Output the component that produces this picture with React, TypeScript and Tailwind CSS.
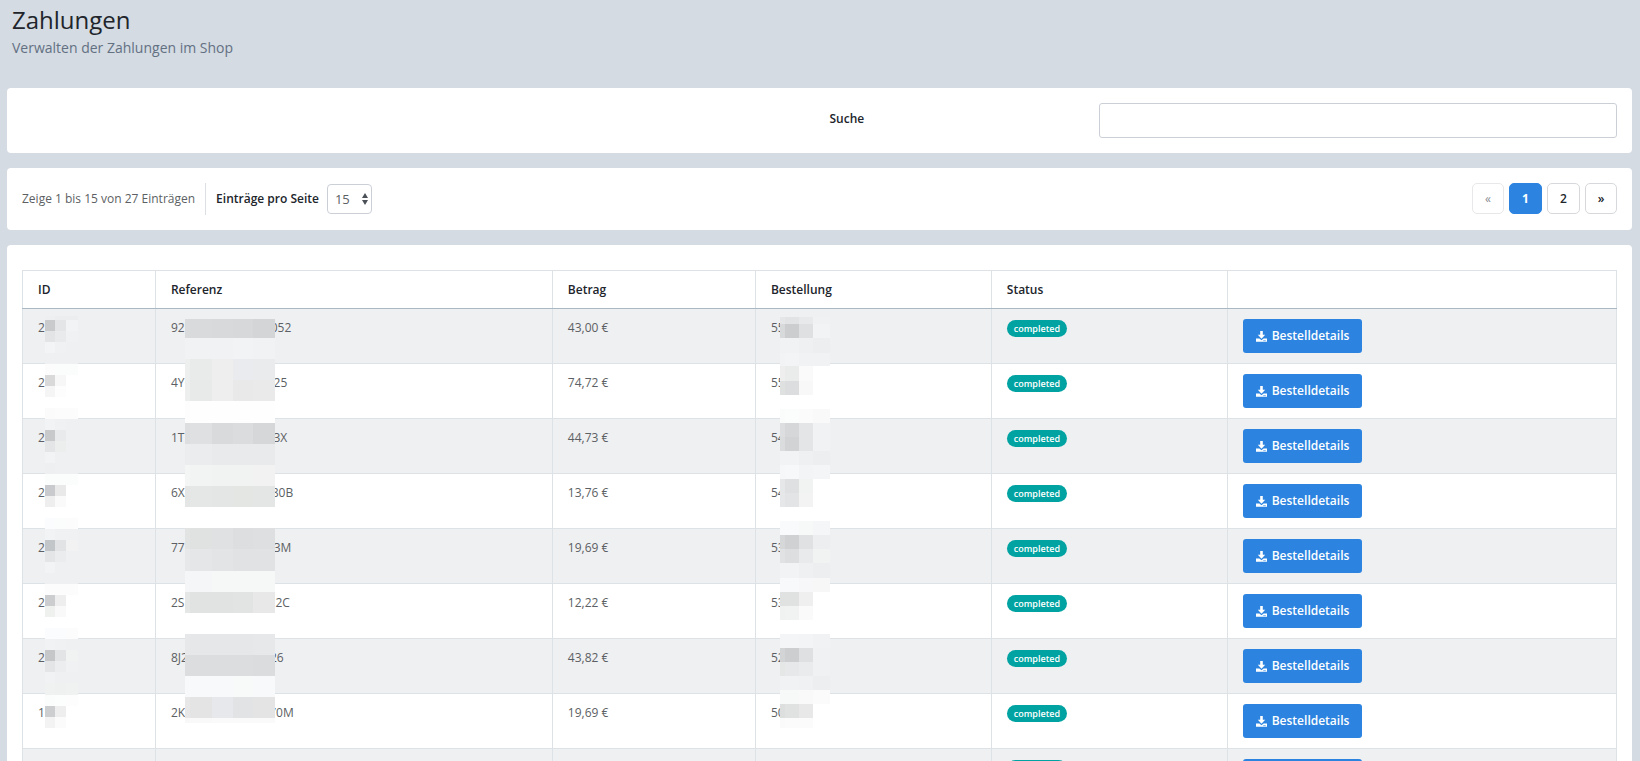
import React from 'react'

type Strip = [y: number, height: number, colors: string[]]

type Payment = { id: string; refStart: string; refGap: number; refEnd: string; amount: string; order: string }

const payments: Payment[] = [
  { id: '2', refStart: '92', refGap: 86, refEnd: '052', amount: '43,00 €', order: '55' },
  { id: '2', refStart: '4Y', refGap: 89, refEnd: '25', amount: '74,72 €', order: '55' },
  { id: '2', refStart: '1T', refGap: 89, refEnd: '3X', amount: '44,73 €', order: '54' },
  { id: '2', refStart: '6X', refGap: 87, refEnd: '80B', amount: '13,76 €', order: '54' },
  { id: '2', refStart: '77', refGap: 89, refEnd: '3M', amount: '19,69 €', order: '53' },
  { id: '2', refStart: '2S', refGap: 91, refEnd: '2C', amount: '12,22 €', order: '53' },
  { id: '2', refStart: '8J2', refGap: 82, refEnd: '26', amount: '43,82 €', order: '52' },
  { id: '1', refStart: '2K', refGap: 84, refEnd: '70M', amount: '19,69 €', order: '50' },
  { id: '1', refStart: '', refGap: 0, refEnd: '', amount: '', order: '' },
]

// Masks start at the top left corner of the first body row
const idEdges = [22, 32, 43, 55]
const idStrips: Strip[] = [
  [7, 4, ['#eeeff1', '#ecedef', '#ecedef']],
  [11, 11, ['#c9cacc', '#e4e5e7', '#f2f3f5']],
  [22, 11, ['#e3e4e6', '#e9eaec', '#f0f1f3']],
  [33, 11, ['#f3f4f6', '#f0f1f3', '#eff0f2']],
  [44, 11, ['#eff0f2', '#eff0f2', '#eff0f2']],
  [55, 11, ['#fbfcfb', '#fbfdfd', '#fbfdfd']],
  [66, 11, ['#d9d9d9', '#f7f7f7']],
  [77, 11, ['#f5f5f5', '#fdfdfd']],
  [99, 11, ['#fbfbfb', '#fcfcfc', '#fcfcfc']],
  [110, 11, ['#f2f3f5', '#f0f1f3', '#eff0f2']],
  [121, 11, ['#c8c9cb', '#e9eaeb', '#eff0f2']],
  [132, 11, ['#e4e5e7', '#eceeed']],
  [143, 11, ['#f2f3f5', '#eff0f2']],
  [154, 11, ['#eeeff1', '#eff0f2', '#eff0f2']],
  [165, 11, ['#fbfdfc', '#fbfdfd', '#fbfdfc']],
  [176, 11, ['#c9cace', '#e9e9ea']],
  [187, 11, ['#eeeeee', '#fafafa']],
  [209, 11, ['#fbfcfd', '#fbfdfd', '#fcfcfc']],
  [220, 11, ['#f2f3f5', '#f0f1f3', '#f0f1f3']],
  [231, 11, ['#c3c6c8', '#e2e3e4', '#f2f2f2']],
  [242, 11, ['#e4e5e7', '#ebecee', '#eff0f2']],
  [253, 11, ['#f2f3f5', '#eff0f2']],
  [264, 11, ['#eff0f2', '#eff0f2', '#eff0f2']],
  [275, 11, ['#fdfcfc', '#fcfcfd', '#fcfcfd']],
  [286, 11, ['#cccdcf', '#eeeeee']],
  [297, 11, ['#eff1ef', '#f9f9f9']],
  [319, 11, ['#fbfcfd', '#fbfcfd', '#fcfcfc']],
  [330, 11, ['#f1f2f4', '#f0f1f3', '#eff0f2']],
  [341, 11, ['#c5c7c9', '#e2e4e5', '#f1f3f2']],
  [352, 11, ['#e4e5e7', '#ecedef', '#f0f1f3']],
  [363, 11, ['#f1f2f4', '#eff0f2', '#eff0f2']],
  [374, 12, ['#f0f1f1', '#eff1f1', '#f0f1f1']],
  [386, 11, ['#fbfdfc', '#fcfdfd', '#fdfdfd']],
  [397, 11, ['#cdcecf', '#eeeeef']],
  [408, 11, ['#f3f3f3', '#fbfbfb']],
]

const refEdges = [29, 34, 56, 77, 97, 119]
const refStrips: Strip[] = [
  [10, 19, ['#dadbdd', '#d9dadc', '#d8d9db', '#d7d8da', '#d4d5d7']],
  [29, 21, ['#f1f2f4', '#f1f2f4', '#f1f2f4', '#f2f3f5', '#f1f2f4']],
  [50, 21, ['#edefef', '#e8ebea', '#eeeeee', '#eaebee', '#eaebed']],
  [71, 21, ['#edeeee', '#e8eae9', '#eeeeee', '#e9e9e9', '#eaeaea']],
  [92, 22, ['#fdfdfe', '#fefefe', '#fefefe', '#fefefe', '#fefefe']],
  [114, 21, ['#dddee0', '#dfe0e2', '#d9dadc', '#dbdcde', '#d6d7d9']],
  [135, 21, ['#ecedef', '#ebeced', '#e9eaec', '#e9eaec', '#e9eaec']],
  [156, 21, ['#f4f5f5', '#f2f4f4', '#f1f3f3', '#f1f3f3', '#f2f2f2']],
  [177, 21, ['#e4e6e5', '#e5e7e6', '#e4e6e5', '#e4e6e4', '#e4e6e5']],
  [219, 21, ['#e2e4e4', '#e0e2e2', '#e0e1e2', '#dddee0', '#dedfe1']],
  [240, 22, ['#e6e8e9', '#e4e6e7', '#e3e4e6', '#e1e2e4', '#e1e2e4']],
  [262, 21, ['#f4f6f8', '#f4f6f8', '#f6f8f7', '#f5f8f7', '#f6f8f7']],
  [283, 21, ['#e5e7e6', '#e1e2e2', '#e1e2e2', '#e1e4e3', '#e8e8e8']],
  [325, 21, ['#e7e8ea', '#e6e7e9', '#e6e7e9', '#e6e7e9', '#e7e8ea']],
  [346, 21, ['#dcdddf', '#dcdddf', '#dcdddf', '#dcdddf', '#dbdcde']],
  [367, 21, ['#f7f9fb', '#f7f9fb', '#f7f9fb', '#f8faf9', '#f7f9fa']],
  [388, 21, ['#e7e7e7', '#e4e4e4', '#e7e8eb', '#e2e3e4', '#e4e4e4']],
  [409, 5, ['#f8f8f8', '#f9f9f9', '#fafafa', '#fafafa', '#fafafa']],
]

const orderEdges = [24, 29, 43, 57, 74]
const orderStrips: Strip[] = [
  [8, 7, ['#e5e6e8', '#e2e3e5', '#e8e9eb', '#f0f1f3']],
  [15, 14, ['#d8d9db', '#cccdcf', '#dfe0e2', '#f2f3f5']],
  [29, 15, ['#f1f2f4', '#f1f2f4', '#eff0f2', '#edeef0']],
  [44, 13, ['#f2f3f5', '#f3f4f6', '#f1f2f4', '#f1f2f4']],
  [57, 15, ['#eeeeee', '#eaebeb', '#fafafa']],
  [72, 14, ['#dfe1e0', '#dcdddf', '#f8f8f8']],
  [100, 14, ['#fafcfc', '#fbfdfd', '#fbfbfb', '#f9f9f9']],
  [114, 14, ['#dddee0', '#d6d7d9', '#e4e5e7', '#f1f2f4']],
  [128, 14, ['#dbdcde', '#d2d3d5', '#e4e5e7', '#f1f2f4']],
  [142, 14, ['#f2f3f4', '#f2f3f4', '#eff0f2', '#edeef0']],
  [156, 14, ['#f6f7f9', '#f6f8fa', '#f3f4f6', '#f3f5f7']],
  [170, 14, ['#e6e7e8', '#dfe0e2', '#f1f2f2']],
  [184, 14, ['#e6e7e8', '#e3e4e6', '#f3f3f3']],
  [212, 14, ['#f8fafb', '#f8fafc', '#f7f9f8', '#f4f6f8']],
  [226, 14, ['#d6d7d9', '#d0d1d3', '#e0e1e3', '#edeef0']],
  [240, 14, ['#e1e2e4', '#dddee0', '#e9eaec', '#f1f3f2']],
  [254, 15, ['#f2f3f5', '#f2f3f5', '#eff0f2', '#edeef0']],
  [269, 14, ['#f8f9fb', '#f8f9fb', '#f7f7f9', '#f7f7f7']],
  [283, 14, ['#e0e2e1', '#e0e2e1', '#efefef']],
  [297, 14, ['#f0f2f2', '#f1f3f3', '#fafafa']],
  [325, 14, ['#f3f5f7', '#f3f5f7', '#f3f4f6', '#f1f2f4']],
  [339, 14, ['#d3d4d6', '#cdced0', '#dfe0e2', '#f0f1f3']],
  [353, 14, ['#e5e7e6', '#e7e8e9', '#eaebed', '#f0f1f3']],
  [367, 14, ['#f1f2f4', '#f1f2f4', '#f0f1f3', '#edeef0']],
  [381, 14, ['#f7f9f8', '#f7f8f8', '#f9f9f9', '#fbfbfb']],
  [395, 14, ['#dddfde', '#e0e2e1', '#e8e8e8']],
  [409, 10, ['#fafafa', '#fbfbfb', '#fbfbfb']],
]

function PixelMask({ edges, strips }: { edges: number[]; strips: Strip[] }) {
  return (
    <svg className="absolute top-0 left-0 z-10 pointer-events-none" width={130} height={430} shapeRendering="crispEdges" aria-hidden="true">
      {strips.map(([y, height, colors]) =>
        colors.map((color, i) => (
          <rect key={`${y}-${i}`} x={edges[i]} y={y} width={edges[i + 1] - edges[i]} height={height} fill={color} />
        ))
      )}
    </svg>
  )
}

function DownloadIcon() {
  return (
    <svg width="11" height="11" viewBox="0 0 11 11" fill="currentColor" aria-hidden="true">
      <path d="M4.2 0h2.6v3.8H9.2L5.5 7.8 1.8 3.8h2.4z" />
      <path d="M0 7.6h3.4l2.1 1.7 2.1-1.7H11v3.2H0z" />
      <path d="M7.2 9.6h2.6" stroke="#2c84e0" strokeWidth="0.6" />
    </svg>
  )
}

function Panel({ className, children }: { className: string; children: React.ReactNode }) {
  return <section className={`bg-white rounded ${className}`}>{children}</section>
}

const headers = ['ID', 'Referenz', 'Betrag', 'Bestellung', 'Status', '']
const cell = 'relative border border-[#dde2e7] px-[15px] py-[10px] align-top'
const pageButton = 'h-[31px] rounded-[5px] border text-center'

export default function App() {
  return (
    <div className="min-h-screen bg-[#d4dbe3] pl-[7px] pr-2 pb-[15px] font-['Open_Sans','Noto_Sans',sans-serif] text-xs leading-[18px] text-[#5c5f63]">
      <header className="h-[88px] px-[5px] pt-1">
        <h1 className="text-2xl leading-8 text-[#21252b]">Zahlungen</h1>
        <p className="text-sm leading-6 text-[#637082]">Verwalten der Zahlungen im Shop</p>
      </header>

      <main className="flex flex-col gap-[15px]">
        <Panel className="p-[15px]">
          <div className="flex justify-end -mx-[10px]">
            <label htmlFor="search" className="w-1/6 px-[10px] pt-[7px] font-semibold text-[#21252b]">Suche</label>
            <div className="w-1/3 px-[10px]">
              <input id="search" type="text" className="block w-full h-[35px] px-3 rounded-[3px] border border-[#cbcfd6] bg-white" />
            </div>
          </div>
        </Panel>

        <Panel className="p-[15px] flex items-start justify-between">
          <div className="flex items-center">
            <span className="pr-[10px] leading-8 border-r border-[#dcdfe3]">Zeige 1 bis 15 von 27 Einträgen</span>
            <label htmlFor="per-page" className="pl-[10px] pr-2 font-semibold text-[#21252b]">Einträge pro Seite</label>
            <div className="relative">
              <select id="per-page" defaultValue="15" className="block appearance-none w-[45px] h-[30px] pl-[7px] rounded-[4px] border border-[#cbcfd6] bg-white text-[13px]">
                <option>15</option>
              </select>
              <svg className="absolute right-1 top-[9px] pointer-events-none" width="6" height="12" viewBox="0 0 6 12" fill="#4b5157" aria-hidden="true">
                <path d="M3 0l3 5H0zM3 12l3-5H0z" />
              </svg>
            </div>
          </div>
          <nav className="flex gap-[5px] text-[#21252b]" aria-label="Seiten">
            <button disabled className={`${pageButton} w-8 border-[#e8e8ea] text-[#8b8e92]`}>«</button>
            <button className={`${pageButton} w-[33px] border-[#2c84e0] bg-[#2c84e0] font-bold text-white`} aria-current="page">1</button>
            <button className={`${pageButton} w-[33px] border-[#d6d8db] font-semibold`}>2</button>
            <button className={`${pageButton} w-8 border-[#d6d8db] font-semibold`}>»</button>
          </nav>
        </Panel>

        <Panel className="px-[15px] pt-[25px] pb-[15px]">
          <table className="w-full table-fixed border-collapse">
            <colgroup>
              <col className="w-[8.34%]" />
              <col className="w-[24.9%]" />
              <col className="w-[12.74%]" />
              <col className="w-[14.8%]" />
              <col className="w-[14.8%]" />
              <col />
            </colgroup>
            <thead>
              <tr className="h-[38px]">
                {headers.map((header) => (
                  <th key={header} className="border border-[#dde2e7] border-b-[#a9b8c5] px-[15px] text-left font-semibold text-[#21252b]">{header}</th>
                ))}
              </tr>
            </thead>
            <tbody>
              {payments.map((payment, index) => (
                <tr key={index} className="odd:bg-[#eff0f2]">
                  <td className={cell}>
                    {payment.id}
                    {index === 0 && <PixelMask edges={idEdges} strips={idStrips} />}
                  </td>
                  <td className={cell}>
                    {payment.refStart}
                    <span className="inline-block" style={{ width: payment.refGap }} />
                    {payment.refEnd}
                    {index === 0 && <PixelMask edges={refEdges} strips={refStrips} />}
                  </td>
                  <td className={cell}>{payment.amount}</td>
                  <td className={cell}>
                    {payment.order}
                    {index === 0 && <PixelMask edges={orderEdges} strips={orderStrips} />}
                  </td>
                  <td className={cell}>
                    <span className="block w-fit mt-px px-[7px] rounded-full bg-[#00a3a1] text-[9px] leading-[17px] font-semibold text-white">completed</span>
                  </td>
                  <td className={cell}>
                    <button className="flex items-center gap-[5px] h-[34px] px-[13px] rounded-[3px] bg-[#2c84e0] font-semibold text-white">
                      <DownloadIcon />
                      Bestelldetails
                    </button>
                  </td>
                </tr>
              ))}
            </tbody>
          </table>
        </Panel>
      </main>
    </div>
  )
}
